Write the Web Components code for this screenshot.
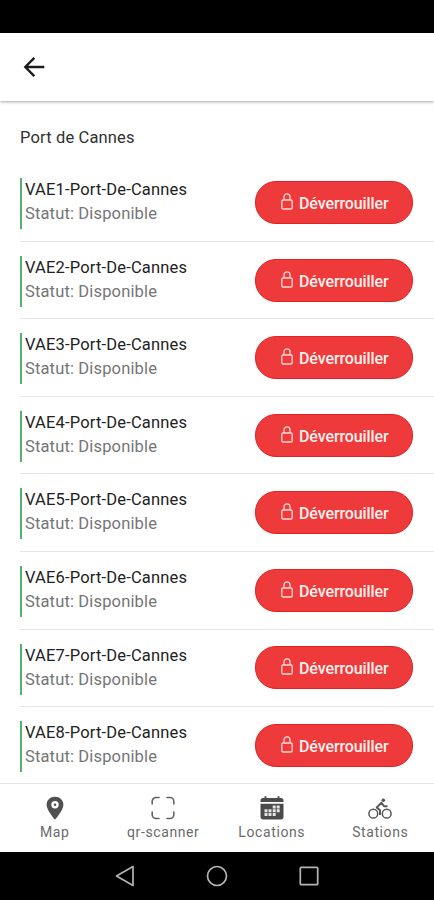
<!DOCTYPE html>
<html lang="fr">
<head>
<meta charset="utf-8">
<meta name="viewport" content="width=device-width, initial-scale=1">
<title>Port de Cannes</title>
<style>
  html, body { margin: 0; height: 100%; }
  body { font-family: Roboto, "Liberation Sans", sans-serif; background: #fff; overflow: hidden; }
</style>
</head>
<body>
<app-shell>
  <app-header slot="header"></app-header>
  <station-list name="Port de Cannes" prefix="VAE" count="8"></station-list>
  <tab-bar slot="footer">
    <tab-item icon="map">Map</tab-item>
    <tab-item icon="scan">qr-scanner</tab-item>
    <tab-item icon="calendar">Locations</tab-item>
    <tab-item icon="bike">Stations</tab-item>
  </tab-bar>
  <system-nav slot="footer"></system-nav>
</app-shell>

<script>
const TAB_ICONS = {
  map: `<path fill="#505050" fill-rule="evenodd" d="M12 .8C7.300 .8 3.600 4.200 3.600 8.800 3.600 14.500 12 23.700 12 23.700S20.400 14.500 20.400 8.800C20.400 4.200 16.700 .8 12 .8zM12 5a3.700 3.700 0 1 1 0 7.400A3.700 3.700 0 0 1 12 5z"/><circle cx="12" cy="8.700" r="1.300" fill="#505050"/>`,
  scan: `<path fill="none" stroke="#626262" stroke-width="1.600" stroke-linecap="round" d="M8 1.500H5A3.800 3.800 0 0 0 1.200 5.300V8M16 1.500h3a3.800 3.800 0 0 1 3.800 3.800V8M8 22.500H5a3.800 3.800 0 0 1-3.800-3.800V16M16 22.500h3a3.800 3.800 0 0 0 3.800-3.800V16"/>`,
  calendar: `<path fill="#4b4b4b" d="M3 2h1.500V.3h2V2h11V.3h2V2H21a2.500 2.500 0 0 1 2.500 2.500V6H.5V4.500A2.500 2.500 0 0 1 3 2zM.5 7.700h23v13a2.700 2.700 0 0 1-2.700 2.700H3.200A2.700 2.700 0 0 1 .5 20.700z"/><path fill="#e4e4e4" d="M12.700 9.500h3v3h-3zM16.700 9.500h3v3h-3zM4.500 13.300h3v3h-3zM8.500 13.300h3v3h-3zM12.700 13.300h3v3h-3zM16.700 13.300h3v3h-3zM4.500 17.100h3v3h-3zM8.500 17.100h3v3h-3zM12.700 17.100h3v3h-3z"/>`,
  bike: `<g fill="none" stroke="#555" stroke-width="1.500"><circle cx="5.300" cy="17.700" r="4.400"/><circle cx="18.700" cy="17.700" r="4.400"/><path stroke-width="1.900" stroke-linejoin="round" d="M12 19v-4.700L8.700 11.500l4.800-4.700 2.500 3.500h3.500"/></g><circle cx="15.300" cy="4.300" r="1.800" fill="#555"/>`
};

class AppShell extends HTMLElement {
  constructor() {
    super();
    this.attachShadow({ mode: 'open' });
    this.shadowRoot.innerHTML = `
      <style>
        :host { display: flex; flex-direction: column; height: 100vh; }
        .status { flex: none; height: 32.500px; background: #000; }
        main { flex: 1; min-height: 0; overflow: hidden; }
      </style>
      <div class="status"></div>
      <slot name="header"></slot>
      <main><slot></slot></main>
      <slot name="footer"></slot>
    `;
  }
}

class AppHeader extends HTMLElement {
  constructor() {
    super();
    this.attachShadow({ mode: 'open' });
    this.shadowRoot.innerHTML = `
      <style>
        :host {
          display: flex;
          align-items: center;
          flex: none;
          height: 68px;
          padding-left: 22px;
          box-sizing: border-box;
          background: #fff;
          box-shadow: 0 1px 3px rgba(0, 0, 0, .35);
          z-index: 1;
        }
        svg { display: block; }
      </style>
      <svg width="24" height="24" viewBox="0 0 24 24" fill="none" stroke="#1c1c1c" stroke-width="2.400">
        <path d="M22.300 12H3.500M12.300 2.800L3.300 12l9 9.200"/>
      </svg>
    `;
  }
}

class UnlockButton extends HTMLElement {
  constructor() {
    super();
    this.attachShadow({ mode: 'open' });
    this.shadowRoot.innerHTML = `
      <style>
        :host { display: block; flex: none; }
        button {
          display: flex;
          align-items: center;
          width: 158px;
          height: 43px;
          padding: 0 0 0 25px;
          border: 1px solid #e32222;
          border-radius: 21px;
          background: #ee3a3a;
          color: #fff0ee;
          font: 500 16px Roboto, sans-serif;
          letter-spacing: -.1px;
        }
        svg { flex: none; margin: -2px 6px 0 0; }
        span { padding-top: 2px; }
      </style>
      <button>
        <svg width="12" height="17" viewBox="0 0 12 17" fill="none" stroke="#ffd9d5" stroke-width="1.300">
          <rect x=".8" y="7" width="10.400" height="9" rx="1.200"/>
          <path d="M3 7V3.900a3 3 0 0 1 6 0V7"/>
        </svg>
        <span><slot></slot></span>
      </button>
    `;
  }
}

class BikeRow extends HTMLElement {
  constructor() {
    super();
    this.attachShadow({ mode: 'open' });
  }

  connectedCallback() {
    this.shadowRoot.innerHTML = `
      <style>
        :host {
          display: flex;
          justify-content: space-between;
          align-items: center;
          box-sizing: border-box;
          height: 77.570px;
          margin-left: 20px;
          padding-right: 21px;
          border-bottom: 1.500px solid #e6e6e6;
        }
        .info {
          box-sizing: border-box;
          height: 51px;
          margin-top: 2.400px;
          padding-left: 3px;
          border-left: 2px solid #4fb56c;
          font-size: 16.500px;
          line-height: 24px;
          white-space: nowrap;
        }
        .name { color: #222; letter-spacing: .17px; }
        .status { color: #757575; letter-spacing: .15px; }
      </style>
      <div class="info">
        <div class="name">${this.getAttribute('name')}</div>
        <div class="status">Statut: ${this.getAttribute('status')}</div>
      </div>
      <unlock-button>Déverrouiller</unlock-button>
    `;
  }
}

class StationList extends HTMLElement {
  constructor() {
    super();
    this.attachShadow({ mode: 'open' });
  }

  connectedCallback() {
    const slug = this.getAttribute('name').replace('de', 'De').replace(/ /g, '-');
    const rows = [];
    for (let i = 1; i <= Number(this.getAttribute('count')); i++) {
      rows.push(`<bike-row name="${this.getAttribute('prefix')}${i}-${slug}" status="Disponible"></bike-row>`);
    }
    this.shadowRoot.innerHTML = `
      <style>
        :host { display: block; }
        h1 {
          box-sizing: border-box;
          height: 63.700px;
          margin: 0;
          padding: 25px 20px 0;
          font-size: 16.500px;
          font-weight: 400;
          line-height: 24px;
          letter-spacing: .15px;
          color: #303030;
        }
      </style>
      <h1>${this.getAttribute('name')}</h1>
      ${rows.join('')}
    `;
  }
}

class TabBar extends HTMLElement {
  constructor() {
    super();
    this.attachShadow({ mode: 'open' });
    this.shadowRoot.innerHTML = `
      <style>
        :host {
          display: grid;
          grid-template-columns: repeat(4, 1fr);
          flex: none;
          box-sizing: border-box;
          height: 69px;
          border-top: 1px solid #e4e4e4;
          background: #fff;
          z-index: 1;
        }
      </style>
      <slot></slot>
    `;
  }
}

class TabItem extends HTMLElement {
  constructor() {
    super();
    this.attachShadow({ mode: 'open' });
  }

  connectedCallback() {
    this.shadowRoot.innerHTML = `
      <style>
        :host {
          display: flex;
          flex-direction: column;
          align-items: center;
          padding: 12px 0 0 1px;
          color: #6a6a6a;
          font-size: 14px;
          line-height: 18px;
          letter-spacing: .6px;
        }
        svg { display: block; margin-bottom: 3px; }
      </style>
      <svg width="24" height="24" viewBox="0 0 24 24">${TAB_ICONS[this.getAttribute('icon')]}</svg>
      <span><slot></slot></span>
    `;
  }
}

// Android back / home / recents bar
class SystemNav extends HTMLElement {
  constructor() {
    super();
    this.attachShadow({ mode: 'open' });
    this.shadowRoot.innerHTML = `
      <style>
        :host {
          display: flex;
          justify-content: center;
          align-items: center;
          gap: 68px;
          flex: none;
          height: 48px;
          background: #000;
        }
      </style>
      <svg width="24" height="24" viewBox="0 0 24 24" fill="none" stroke="#b4b4b4" stroke-width="1.700" stroke-linejoin="round"><path d="M20 2.500v19L3.500 12z"/></svg>
      <svg width="24" height="24" viewBox="0 0 24 24" fill="none" stroke="#b4b4b4" stroke-width="1.700"><circle cx="12" cy="12" r="9.500"/></svg>
      <svg width="24" height="24" viewBox="0 0 24 24" fill="none" stroke="#b4b4b4" stroke-width="1.700"><rect x="3.300" y="3.300" width="17.400" height="17.400" rx="1"/></svg>
    `;
  }
}

customElements.define('app-shell', AppShell);
customElements.define('app-header', AppHeader);
customElements.define('unlock-button', UnlockButton);
customElements.define('bike-row', BikeRow);
customElements.define('station-list', StationList);
customElements.define('tab-bar', TabBar);
customElements.define('tab-item', TabItem);
customElements.define('system-nav', SystemNav);
</script>
</body>
</html>
